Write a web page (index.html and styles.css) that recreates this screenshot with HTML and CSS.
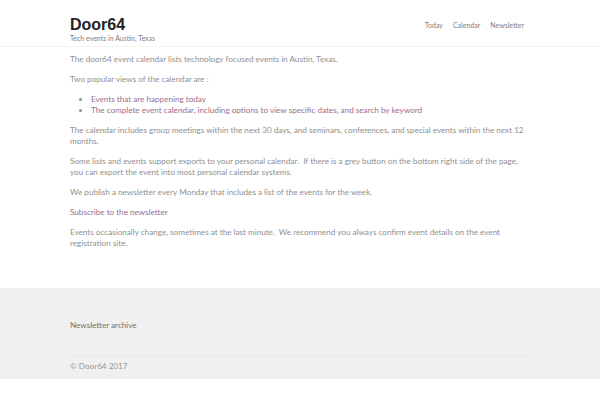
FILE: index.html
```html
<!DOCTYPE html>
<html lang="en">
<head>
  <meta charset="UTF-8">
  <meta name="viewport" content="width=device-width, initial-scale=1.0">
  <title>Door64</title>
  <link rel="stylesheet" href="styles.css">
</head>
<body>
  <header class="site-header">
    <div class="wrap header-inner">
      <div class="branding">
        <div class="site-title">Door64</div>
        <div class="site-desc">Tech events in Austin, Texas</div>
      </div>
      <nav class="main-nav">
        <a href="#">Today</a>
        <a href="#">Calendar</a>
        <a href="#">Newsletter</a>
      </nav>
    </div>
  </header>

  <main class="wrap content">
    <p>The door64 event calendar lists technology focused events in Austin, Texas.</p>
    <p>Two popular views of the calendar are :</p>
    <ul>
      <li><a href="#">Events that are happening today</a></li>
      <li><a href="#">The complete event calendar, including options to view specific dates, and search by keyword</a></li>
    </ul>
    <p>The calendar includes group meetings within the next 30 days, and seminars, conferences, and special events within the next 12 months.</p>
    <p>Some lists and events support exports to your personal calendar.&nbsp; If there is a grey button on the bottom right side of the page, you can export the event into most personal calendar systems.</p>
    <p>We publish a newsletter every Monday that includes a list of the events for the week.</p>
    <p><a href="#">Subscribe to the newsletter</a></p>
    <p>Events occasionally change, sometimes at the last minute.&nbsp; We recommend you always confirm event details on the event registration site.</p>
  </main>

  <footer class="site-footer">
    <div class="wrap">
      <div class="footer-widgets">
        <a href="#">Newsletter archive</a>
      </div>
      <div class="site-info">&copy; Door64 2017</div>
    </div>
  </footer>
</body>
</html>
```

FILE: styles.css
```css
body {
  font-family: "Lato", "Liberation Sans", sans-serif;
  margin: 0;
  padding: 0;
  background-color: #fff;
  color: #8f8f8f;
  font-size: 8.15px;
  line-height: 11px;
}

a {
  color: #9b6d8e;
  text-decoration: none;
}

.wrap {
  width: 460px;
  margin: 0 auto;
}

/* header */
.site-header {
  border-bottom: 1px solid #f3f3f3;
}

.header-inner {
  display: flex;
  justify-content: space-between;
  align-items: center;
  padding: 17px 0 3px;
}

.site-title {
  font-family: "Liberation Sans", sans-serif;
  font-size: 16px;
  line-height: 16px;
  font-weight: bold;
  color: #222;
}

.site-desc {
  font-size: 7px;
  color: #808080;
  line-height: 10px;
}

.main-nav {
  display: flex;
  gap: 10px;
  margin: -10px 6px 0 0;
  font-size: 7px;
}

.main-nav a {
  color: #808080;
}

/* content */
.content {
  padding: 7px 0 30px;
}

.content p {
  margin: 0 0 9px;
}

.content ul {
  margin: 0 0 9px;
  padding-left: 21px;
}

/* footer */
.site-footer {
  background-color: #f0f0f0;
}

.footer-widgets {
  padding: 32px 0 25px;
  border-bottom: 1px solid #e9e9e9;
}

.footer-widgets a {
  color: #707070;
}

.site-info {
  padding: 4px 0 7px;
  color: #999;
}
```
